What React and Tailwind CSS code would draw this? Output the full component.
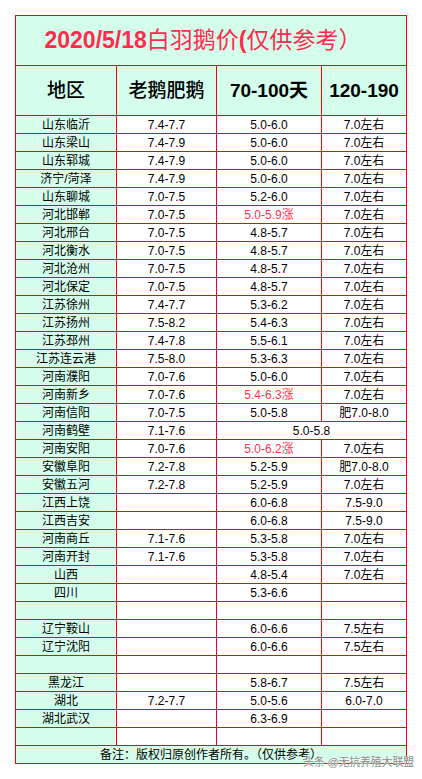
import React from 'react';

const FONT = { fontFamily: '"Liberation Sans", Arial, "Noto Sans CJK SC", sans-serif' };

// [region, old/fat goose, 70-100 days, 120-190, flags]
const ROWS = [
  ['山东临沂', '7.4-7.7', '5.0-6.0', '7.0左右'],
  ['山东梁山', '7.4-7.9', '5.0-6.0', '7.0左右'],
  ['山东郓城', '7.4-7.9', '5.0-6.0', '7.0左右'],
  ['济宁/菏泽', '7.4-7.9', '5.0-6.0', '7.0左右'],
  ['山东聊城', '7.0-7.5', '5.2-6.0', '7.0左右'],
  ['河北邯郸', '7.0-7.5', '5.0-5.9涨', '7.0左右', 'red'],
  ['河北邢台', '7.0-7.5', '4.8-5.7', '7.0左右'],
  ['河北衡水', '7.0-7.5', '4.8-5.7', '7.0左右'],
  ['河北沧州', '7.0-7.5', '4.8-5.7', '7.0左右'],
  ['河北保定', '7.0-7.5', '4.8-5.7', '7.0左右'],
  ['江苏徐州', '7.4-7.7', '5.3-6.2', '7.0左右'],
  ['江苏扬州', '7.5-8.2', '5.4-6.3', '7.0左右'],
  ['江苏邳州', '7.4-7.8', '5.5-6.1', '7.0左右'],
  ['江苏连云港', '7.5-8.0', '5.3-6.3', '7.0左右'],
  ['河南濮阳', '7.0-7.6', '5.0-6.0', '7.0左右'],
  ['河南新乡', '7.0-7.6', '5.4-6.3涨', '7.0左右', 'red'],
  ['河南信阳', '7.0-7.5', '5.0-5.8', '肥7.0-8.0'],
  ['河南鹤壁', '7.1-7.6', '5.0-5.8', null, 'merge'],
  ['河南安阳', '7.0-7.6', '5.0-6.2涨', '7.0左右', 'red'],
  ['安徽阜阳', '7.2-7.8', '5.2-5.9', '肥7.0-8.0'],
  ['安徽五河', '7.2-7.8', '5.2-5.9', '7.0左右'],
  ['江西上饶', '', '6.0-6.8', '7.5-9.0'],
  ['江西吉安', '', '6.0-6.8', '7.5-9.0'],
  ['河南商丘', '7.1-7.6', '5.3-5.8', '7.0左右'],
  ['河南开封', '7.1-7.6', '5.3-5.8', '7.0左右'],
  ['山西', '', '4.8-5.4', '7.0左右'],
  ['四川', '', '5.3-6.6', ''],
  ['', '', '', ''],
  ['辽宁鞍山', '', '6.0-6.6', '7.5左右'],
  ['辽宁沈阳', '', '6.0-6.6', '7.5左右'],
  ['', '', '', ''],
  ['黑龙江', '', '5.8-6.7', '7.5左右'],
  ['湖北', '7.2-7.7', '5.0-5.6', '6.0-7.0'],
  ['湖北武汉', '', '6.3-6.9', ''],
  ['', '', '', ''],
];

const cell = 'h-[17px] flex items-center justify-center text-[12px] leading-none whitespace-nowrap';

export default function App() {
  return (
    <div className="relative w-[422px] h-[779px] bg-white pt-[15px] pl-[15px] overflow-hidden" style={FONT}>
      <div className="grid grid-cols-[100px_99px_104px_84px] gap-px p-px bg-[#ff0000] w-[392px]">
        {/* title */}
        <div className="col-span-4 h-[49px] bg-[#d5fdeb] flex items-center justify-center text-[23px] leading-none text-[#ff2a4d] pr-[16px]">
          <span className="font-bold">2020/5/18</span>
          <span>白羽鹅价</span>
          <span className="font-bold">(</span>
          <span>仅供参考）</span>
        </div>

        {/* header */}
        {['地区', '老鹅肥鹅', '70-100天', '120-190'].map((h, i) => (
          <div key={h} className={`h-[49px] bg-[#d5fdeb] flex items-center justify-center text-[19px] leading-none text-black ${i > 1 ? 'font-bold' : 'font-medium'}`}>
            {h}
          </div>
        ))}

        {ROWS.map(([region, a, b, c, flag], i) => (
          <React.Fragment key={i}>
            <div className={`${cell} bg-[#d5fdeb] text-black`}>{region}</div>
            <div className={`${cell} bg-white text-black`}>{a}</div>
            {flag === 'merge' ? (
              <div className={`${cell} bg-white text-black col-span-2`}>{b}</div>
            ) : (
              <>
                <div className={`${cell} bg-white ${flag === 'red' ? 'text-[#ff3352]' : 'text-black'}`}>{b}</div>
                <div className={`${cell} bg-white text-black`}>{c}</div>
              </>
            )}
          </React.Fragment>
        ))}

        {/* footer note */}
        <div className={`${cell} col-span-4 bg-[#d5fdeb] text-black`}>备注：版权归原创作者所有。（仅供参考）</div>
      </div>

      {/* watermark */}
      <div
        className="absolute left-[303px] top-[757px] text-[11px] leading-none text-[#8a8a8a] whitespace-nowrap tracking-[-0.2px]"
        style={{ textShadow: '0 0 2px #fff, 0 0 1px #fff' }}
      >
        头条 @无抗养殖大联盟
      </div>
    </div>
  );
}
